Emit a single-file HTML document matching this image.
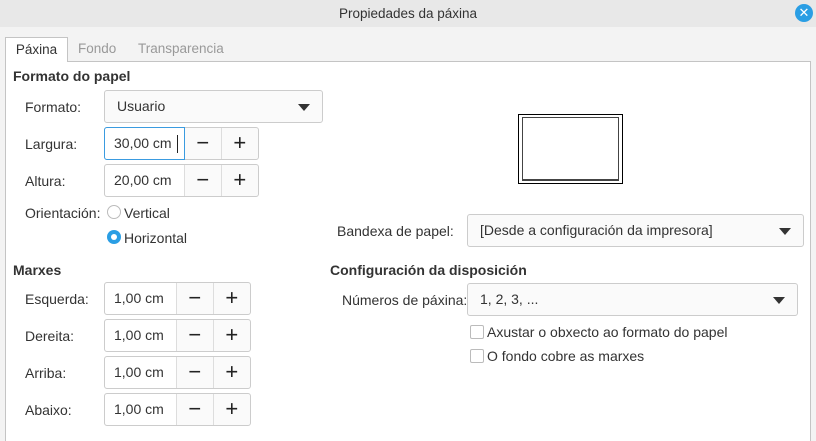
<!DOCTYPE html>
<html><head><meta charset="utf-8"><style>
*{box-sizing:border-box;margin:0;padding:0}
html,body{width:816px;height:441px;overflow:hidden}
body{background:#f3f3f3;font-family:"Liberation Sans",sans-serif;font-size:13px;color:#333;position:relative}
.a{position:absolute}
.title{left:0;top:0;width:816px;height:27px;background:#e8e8e8;text-align:center;line-height:27px;font-size:13.5px;color:#333}
.close{left:795px;top:4px;width:18px;height:18px;border-radius:50%;background:#2a9ee4;color:#fff;text-align:center;line-height:18px;font-size:13px}
.panel{left:5px;top:61px;width:806px;height:380px;background:#fff;border:1px solid #c4c4c4;border-bottom:none}
.tab{top:37px;height:25px;line-height:24px;font-size:13.5px;color:#999}
.tab.on{background:#fff;border:1px solid #c4c4c4;border-bottom:none;color:#333;left:5px;width:63px;text-align:center}
.h{font-weight:bold;font-size:14px;color:#333}
.lbl{font-size:14px}
.box{border:1px solid #ccc;border-radius:3px;background:#fafafa}
.dd{padding-left:12px;line-height:31px;font-size:14px}
.dd:after{content:"";position:absolute;right:12px;top:13px;border-left:6px solid transparent;border-right:6px solid transparent;border-top:7px solid #333}
.spin{border:1px solid #ccc;border-radius:3px;background:#fafafa;height:33px;display:flex}
.spin .t{background:#fff;padding-left:9px;line-height:31px;font-size:14px;border-right:1px solid #ddd;border-radius:3px 0 0 3px;position:relative}
.spin .b{width:37px;text-align:center;line-height:30px;font-size:22px;color:#222;border-right:1px solid #ddd}
.spin .b:last-child{border-right:none}
.cb{width:14px;height:14px;border:1px solid #bbb;border-radius:2px;background:#fff}
</style></head><body>
<div class="a title">Propiedades da páxina</div>
<div class="a close">✕</div>
<div class="a panel"></div>
<div class="a tab on">Páxina</div>
<div class="a tab" style="left:78px">Fondo</div>
<div class="a tab" style="left:138px">Transparencia</div>

<div class="a h" style="left:13px;top:68px">Formato do papel</div>
<div class="a lbl" style="left:25px;top:99px">Formato:</div>
<div class="a box dd" style="left:104px;top:90px;width:219px;height:33px">Usuario</div>
<div class="a lbl" style="left:25px;top:136px">Largura:</div>
<div class="a spin" style="left:104px;top:127px;width:155px"><div class="t" style="border:1px solid #3a9be0;margin:-1px 0 -1px -1px;height:33px;width:82px">30,00 cm<span style="position:absolute;left:72px;top:7px;width:1px;height:18px;background:#222"></span></div><div class="b">−</div><div class="b">+</div></div>
<div class="a lbl" style="left:25px;top:173px">Altura:</div>
<div class="a spin" style="left:104px;top:164px;width:155px"><div class="t" style="width:81px">20,00 cm</div><div class="b">−</div><div class="b">+</div></div>
<div class="a lbl" style="left:25px;top:205px">Orientación:</div>
<div class="a" style="left:107px;top:205px;width:14px;height:14px;border:1px solid #bbb;border-radius:50%;background:#fff"></div>
<div class="a lbl" style="left:124px;top:205px">Vertical</div>
<div class="a" style="left:107px;top:230px;width:14px;height:14px;border-radius:50%;background:#2a9ee4"><div style="margin:4px;width:6px;height:6px;border-radius:50%;background:#fff"></div></div>
<div class="a lbl" style="left:124px;top:230px">Horizontal</div>

<div class="a h" style="left:13px;top:262px">Marxes</div>
<div class="a lbl" style="left:25px;top:291px">Esquerda:</div>
<div class="a spin" style="left:104px;top:282px;width:147px"><div class="t" style="width:73px">1,00 cm</div><div class="b">−</div><div class="b">+</div></div>
<div class="a lbl" style="left:25px;top:328px">Dereita:</div>
<div class="a spin" style="left:104px;top:319px;width:147px"><div class="t" style="width:73px">1,00 cm</div><div class="b">−</div><div class="b">+</div></div>
<div class="a lbl" style="left:25px;top:365px">Arriba:</div>
<div class="a spin" style="left:104px;top:356px;width:147px"><div class="t" style="width:73px">1,00 cm</div><div class="b">−</div><div class="b">+</div></div>
<div class="a lbl" style="left:25px;top:402px">Abaixo:</div>
<div class="a spin" style="left:104px;top:393px;width:147px"><div class="t" style="width:73px">1,00 cm</div><div class="b">−</div><div class="b">+</div></div>

<div class="a" style="left:518px;top:114px;width:105px;height:70px;border:1px solid #000"></div>
<div class="a" style="left:522px;top:117px;width:97px;height:64px;border:1px solid #444;border-width:1px 1px 2px 1px"></div>

<div class="a lbl" style="left:337px;top:223px">Bandexa de papel:</div>
<div class="a box dd" style="left:467px;top:214px;width:337px;height:33px">[Desde a configuración da impresora]</div>
<div class="a h" style="left:330px;top:262px">Configuración da disposición</div>
<div class="a lbl" style="left:342px;top:292px">Números de páxina:</div>
<div class="a box dd" style="left:467px;top:283px;width:331px;height:33px">1, 2, 3, ...</div>
<div class="a cb" style="left:470px;top:325px"></div>
<div class="a lbl" style="left:487px;top:324px">Axustar o obxecto ao formato do papel</div>
<div class="a cb" style="left:470px;top:349px"></div>
<div class="a lbl" style="left:487px;top:348px">O fondo cobre as marxes</div>
</body></html>
